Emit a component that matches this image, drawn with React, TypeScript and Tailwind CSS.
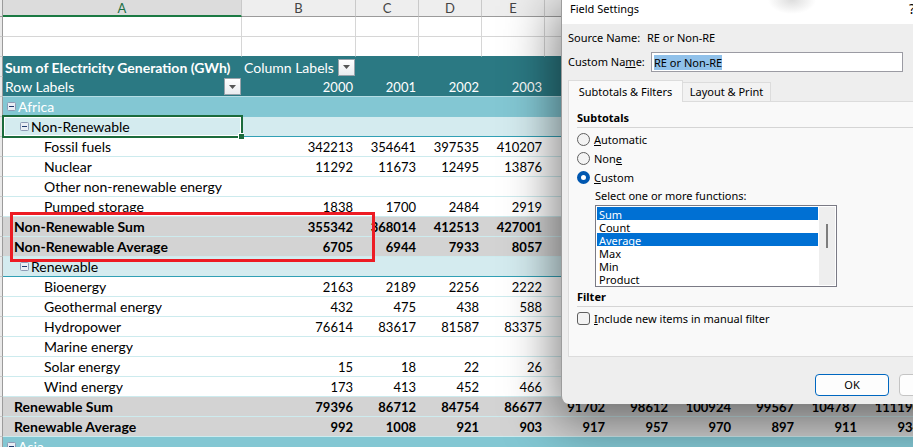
import { useEffect, useRef } from "react";
import type { ReactNode } from "react";

type Kind = "group" | "subgroup" | "item" | "total";
type Row = { kind: Kind; label: string; values?: (number | string)[]; selected?: boolean };

const COLUMNS = ["B", "C", "D", "E", "F", "G", "H", "I", "J", "K"];
const VISIBLE_HEADERS = 4;

const ROWS: Row[] = [
  { kind: "group", label: "Africa" },
  { kind: "subgroup", label: "Non-Renewable", selected: true },
  { kind: "item", label: "Fossil fuels", values: [342213, 354641, 397535, 410207] },
  { kind: "item", label: "Nuclear", values: [11292, 11673, 12495, 13876] },
  { kind: "item", label: "Other non-renewable energy" },
  { kind: "item", label: "Pumped storage", values: [1838, 1700, 2484, 2919] },
  { kind: "total", label: "Non-Renewable Sum", values: [355342, 368014, 412513, 427001] },
  { kind: "total", label: "Non-Renewable Average", values: [6705, 6944, 7933, 8057] },
  { kind: "subgroup", label: "Renewable" },
  { kind: "item", label: "Bioenergy", values: [2163, 2189, 2256, 2222] },
  { kind: "item", label: "Geothermal energy", values: [432, 475, 438, 588] },
  { kind: "item", label: "Hydropower", values: [76614, 83617, 81587, 83375] },
  { kind: "item", label: "Marine energy" },
  { kind: "item", label: "Solar energy", values: [15, 18, 22, 26] },
  { kind: "item", label: "Wind energy", values: [173, 413, 452, 466] },
  {
    kind: "total",
    label: "Renewable Sum",
    values: [79396, 86712, 84754, 86677, 91702, 98612, 100924, 99567, 104787, 111190],
  },
  {
    kind: "total",
    label: "Renewable Average",
    values: [992, 1008, 921, 903, 917, 957, 970, 897, 911, 934],
  },
  { kind: "group", label: "Asia" },
];

const ROW_STYLE: Record<Kind, string> = {
  group: "bg-[#83c7d3] text-white",
  subgroup: "bg-[#d4ebef]",
  item: "bg-white",
  total: "bg-[#d3d3d3] font-bold",
};

const CELL_BORDER: Record<Kind, string> = {
  group: "border-[#83c7d3]",
  subgroup: "border-[#31a0b5]",
  item: "border-[#cdebee]",
  total: "border-[#cdebee]",
};

const INDENT: Record<Kind, string> = {
  group: "pl-1",
  subgroup: "pl-[17px]",
  item: "pl-[41px]",
  total: "pl-[11px]",
};

function FilterButton({ label }: { label: string }) {
  return (
    <button
      type="button"
      aria-label={label}
      className="flex size-[17px] shrink-0 items-center justify-center border border-[#9aa3ab] bg-linear-to-b from-white to-[#e9ecef]"
    >
      <svg width="7" height="4" viewBox="0 0 7 4">
        <path d="M0 0h7L3.500 4z" fill="#555" />
      </svg>
    </button>
  );
}

function CollapseButton({ label }: { label: string }) {
  return (
    <button type="button" aria-label={label} className="flex">
      <svg width="9" height="9" viewBox="0 0 9 9">
        <rect x=".5" y=".5" width="8" height="8" rx="1" fill="#e8edf4" stroke="#8d9bb5" />
        <path d="M2 4.500h5" stroke="#1f3b6e" />
      </svg>
    </button>
  );
}

function RowHead() {
  return <td className="border-r border-b border-r-[#9b9b9b] border-b-[#c9c9c9] bg-[#e9e9e9] p-0" />;
}

function EmptyRow({ last }: { last?: boolean }) {
  const line = last ? "border-b-[#2b7983]" : "border-b-[#d6d6d6]";
  return (
    <tr className="h-5">
      <RowHead />
      <td className={`border-r border-b border-r-[#d6d6d6] bg-white p-0 ${line}`} />
      {COLUMNS.map((c) => (
        <td key={c} className={`border-r border-b border-r-[#d6d6d6] bg-white p-0 ${line}`} />
      ))}
    </tr>
  );
}

function DataRow({ row }: { row: Row }) {
  const border = CELL_BORDER[row.kind];
  const collapsible = row.kind === "group" || row.kind === "subgroup";
  return (
    <tr className={`h-5 ${ROW_STYLE[row.kind]}`}>
      <RowHead />
      <td className={`relative border-b p-0 pb-px text-sm leading-[17px] ${border} ${INDENT[row.kind]}`}>
        <div className="flex items-center gap-[2px]">
          {collapsible && <CollapseButton label={`Collapse ${row.label}`} />}
          <span>{row.label}</span>
        </div>
        {row.selected && (
          <div className="pointer-events-none absolute -top-[2px] -right-px -bottom-[2px] -left-px z-10 border-2 border-[#1b6b3c] outline-1 -outline-offset-3 outline-white">
            <div className="absolute -right-[3px] -bottom-[3px] size-[6px] border-t border-l border-white bg-[#1b6b3c]" />
          </div>
        )}
        {row.label === "Non-Renewable Sum" && (
          <div className="pointer-events-none absolute -top-[5px] left-[7px] z-10 h-[50px] w-[365px] border-3 border-[#ed1c24]" />
        )}
      </td>
      {COLUMNS.map((c, i) => (
        <td key={c} className={`border-b p-0 pt-[2px] pr-[3px] text-right leading-[17px] ${border}`}>
          {row.values?.[i]}
        </td>
      ))}
    </tr>
  );
}

function Sheet() {
  return (
    <table className="w-[923px] table-fixed border-separate border-spacing-0 font-[Lato,'Noto_Sans',sans-serif] text-[13px] leading-[17px] whitespace-nowrap text-black">
      <colgroup>
        <col className="w-[3px]" />
        <col className="w-[239px]" />
        <col className="w-[114px]" />
        {COLUMNS.slice(1).map((c) => (
          <col key={c} className="w-[63px]" />
        ))}
      </colgroup>
      <thead>
        <tr className="h-[17px]">
          <td className="border-r border-b border-[#9b9b9b] bg-[#e9e9e9] p-0" />
          <th className="border-r border-b-2 border-r-[#c9c9c9] border-b-[#1b7a43] bg-[#dcdcdc] p-0 text-[13px] leading-[14px] font-normal text-[#1b7046]">
            A
          </th>
          {COLUMNS.map((c, i) => (
            <th
              key={c}
              className="border-r border-b border-r-[#c9c9c9] border-b-[#9b9b9b] bg-[#eee] p-0 pb-px text-[13px] leading-[14px] font-normal text-[#444]"
            >
              {i < VISIBLE_HEADERS ? c : null}
            </th>
          ))}
        </tr>
      </thead>
      <tbody>
        <EmptyRow />
        <EmptyRow last />
        <tr className="h-5 bg-[#2b7983] text-sm leading-[17px] text-white">
          <RowHead />
          <td className="p-0 pl-[2px] font-bold">Sum of Electricity Generation (GWh)</td>
          <td className="p-0 pr-px pl-[2px]">
            <div className="flex items-center justify-between">
              Column Labels
              <FilterButton label="Filter column labels" />
            </div>
          </td>
          <td colSpan={9} className="p-0" />
        </tr>
        <tr className="h-5 bg-[#2b7983] text-white">
          <RowHead />
          <td className="border-b border-[#b5dde4] p-0 pr-px pl-[2px] text-sm leading-[17px]">
            <div className="flex items-center justify-between">
              Row Labels
              <FilterButton label="Filter row labels" />
            </div>
          </td>
          {COLUMNS.map((c, i) => (
            <td key={c} className="border-b border-[#b5dde4] p-0 pt-[2px] pr-[3px] text-right">
              {i < VISIBLE_HEADERS ? 2000 + i : null}
            </td>
          ))}
        </tr>
        {ROWS.map((row) => (
          <DataRow key={row.label} row={row} />
        ))}
      </tbody>
    </table>
  );
}

function SectionTitle({ children }: { children: ReactNode }) {
  return <h2 className="border-b border-[#d5d5d5] pb-px font-bold">{children}</h2>;
}

function Radio({ checked, children }: { checked?: boolean; children: ReactNode }) {
  return (
    <label className="flex h-[19px] items-center gap-1">
      <input
        type="radio"
        name="subtotals"
        defaultChecked={checked}
        className="size-[13px] appearance-none rounded-full border border-[#5f5f5f] bg-[#f3f3f3] checked:border-4 checked:border-[#0057b0] checked:bg-white"
      />
      <span>{children}</span>
    </label>
  );
}

function FieldSettings() {
  const nameRef = useRef<HTMLInputElement>(null);
  useEffect(() => {
    nameRef.current?.focus();
    nameRef.current?.select();
  }, []);

  return (
    <div
      role="dialog"
      aria-label="Field Settings"
      className="absolute top-0 left-[561px] z-20 w-[421px] overflow-hidden rounded-b-lg border-l border-[#9c9c9c] bg-[#eee] font-['Noto_Sans','Open_Sans',sans-serif] text-[11px] leading-4 whitespace-nowrap text-black shadow-[0_12px_50px_6px_rgba(0,0,0,0.5)]"
    >
      <header className="relative flex h-6 items-start bg-white pt-px pl-2">
        <span>Field Settings</span>
        <button type="button" aria-label="Help" className="ml-auto pr-[67px] text-sm leading-4">
          ?
        </button>
        <div className="absolute -top-[14px] left-[206px] h-7 w-12 bg-[radial-gradient(closest-side,#ddd,transparent)]" />
      </header>

      <div className="px-[6px] pt-[6px] pb-2">
        <div className="flex">
          <span className="w-[79px]">Source Name:</span>
          <span>RE or Non-RE</span>
        </div>
        <div className="mt-[6px] flex items-center">
          <label htmlFor="custom-name" className="w-[83px]">
            Custom Na<u>m</u>e:
          </label>
          <input
            id="custom-name"
            ref={nameRef}
            defaultValue="RE or Non-RE"
            className="h-5 w-[252px] border border-[#9b9ba3] bg-white px-[2px] text-[11px] leading-[14px] outline-none selection:bg-[#90c1ea] selection:text-black"
          />
        </div>

        <div role="tablist" className="mt-2 flex h-[21px] items-end">
          <button
            role="tab"
            aria-selected="true"
            type="button"
            className="relative -mb-px h-[22px] w-[115px] shrink-0 border border-b-0 border-[#dcdcdc] bg-[#f9f9f9]"
          >
            Subtotals &amp; Filters
          </button>
          <button
            role="tab"
            aria-selected="false"
            type="button"
            className="h-[19px] w-[88px] border border-b-0 border-l-0 border-[#dcdcdc] bg-[#f2f2f2]"
          >
            Layout &amp; Print
          </button>
        </div>

        <section className="border border-[#dcdcdc] bg-[#f9f9f9] pt-2 pb-7 pl-2">
          <SectionTitle>Subtotals</SectionTitle>
          <div className="mt-[2px]">
            <Radio>
              <u>A</u>utomatic
            </Radio>
            <Radio>
              Non<u>e</u>
            </Radio>
            <Radio checked>
              <u>C</u>ustom
            </Radio>
          </div>
          <div className="pt-px pl-[18px]">
            <label htmlFor="functions" className="block pb-px">
              Select one or more functions:
            </label>
            <div className="flex h-[82px] w-[242px] border border-[#7a7a85] bg-white p-px">
              <select
                id="functions"
                multiple
                size={6}
                defaultValue={["Sum", "Average"]}
                className="h-[78px] flex-1 appearance-none overflow-hidden border-0 p-0 text-[11px] outline-none [scrollbar-width:none]"
              >
                {["Sum", "Count", "Average", "Max", "Min", "Product"].map((f) => (
                  <option
                    key={f}
                    className="h-[13px] min-h-0 p-0 pl-[2px] leading-[11px] text-black checked:bg-[linear-gradient(#0070d3,#0070d3)] checked:[-webkit-text-fill-color:white]"
                  >
                    {f}
                  </option>
                ))}
              </select>
              <div className="ml-px w-4 bg-[#eee] pt-[17px] pl-[7px]">
                <div className="h-6 w-[2px] bg-[#7d7d7d]" />
              </div>
            </div>
          </div>
          <div className="mt-[2px]">
            <SectionTitle>Filter</SectionTitle>
          </div>
          <label className="mt-[2px] flex h-[19px] items-center gap-1">
            <input
              type="checkbox"
              className="size-[13px] appearance-none rounded-[3px] border border-[#5f5f5f] bg-[#f3f3f3]"
            />
            <span>
              <u>I</u>nclude new items in manual filter
            </span>
          </label>
        </section>

        <div className="mt-[17px] flex justify-end gap-[10px] pr-[3px]">
          <button type="button" className="h-[22px] w-[74px] rounded border border-[#0067c0] bg-[#fdfdfd]">
            OK
          </button>
          <button type="button" className="h-[22px] w-[74px] rounded border border-[#c4c4c4] bg-[#fdfdfd]">
            Cancel
          </button>
        </div>
      </div>
    </div>
  );
}

export default function App() {
  return (
    <main className="relative h-screen w-full overflow-hidden bg-white">
      <Sheet />
      <FieldSettings />
    </main>
  );
}
